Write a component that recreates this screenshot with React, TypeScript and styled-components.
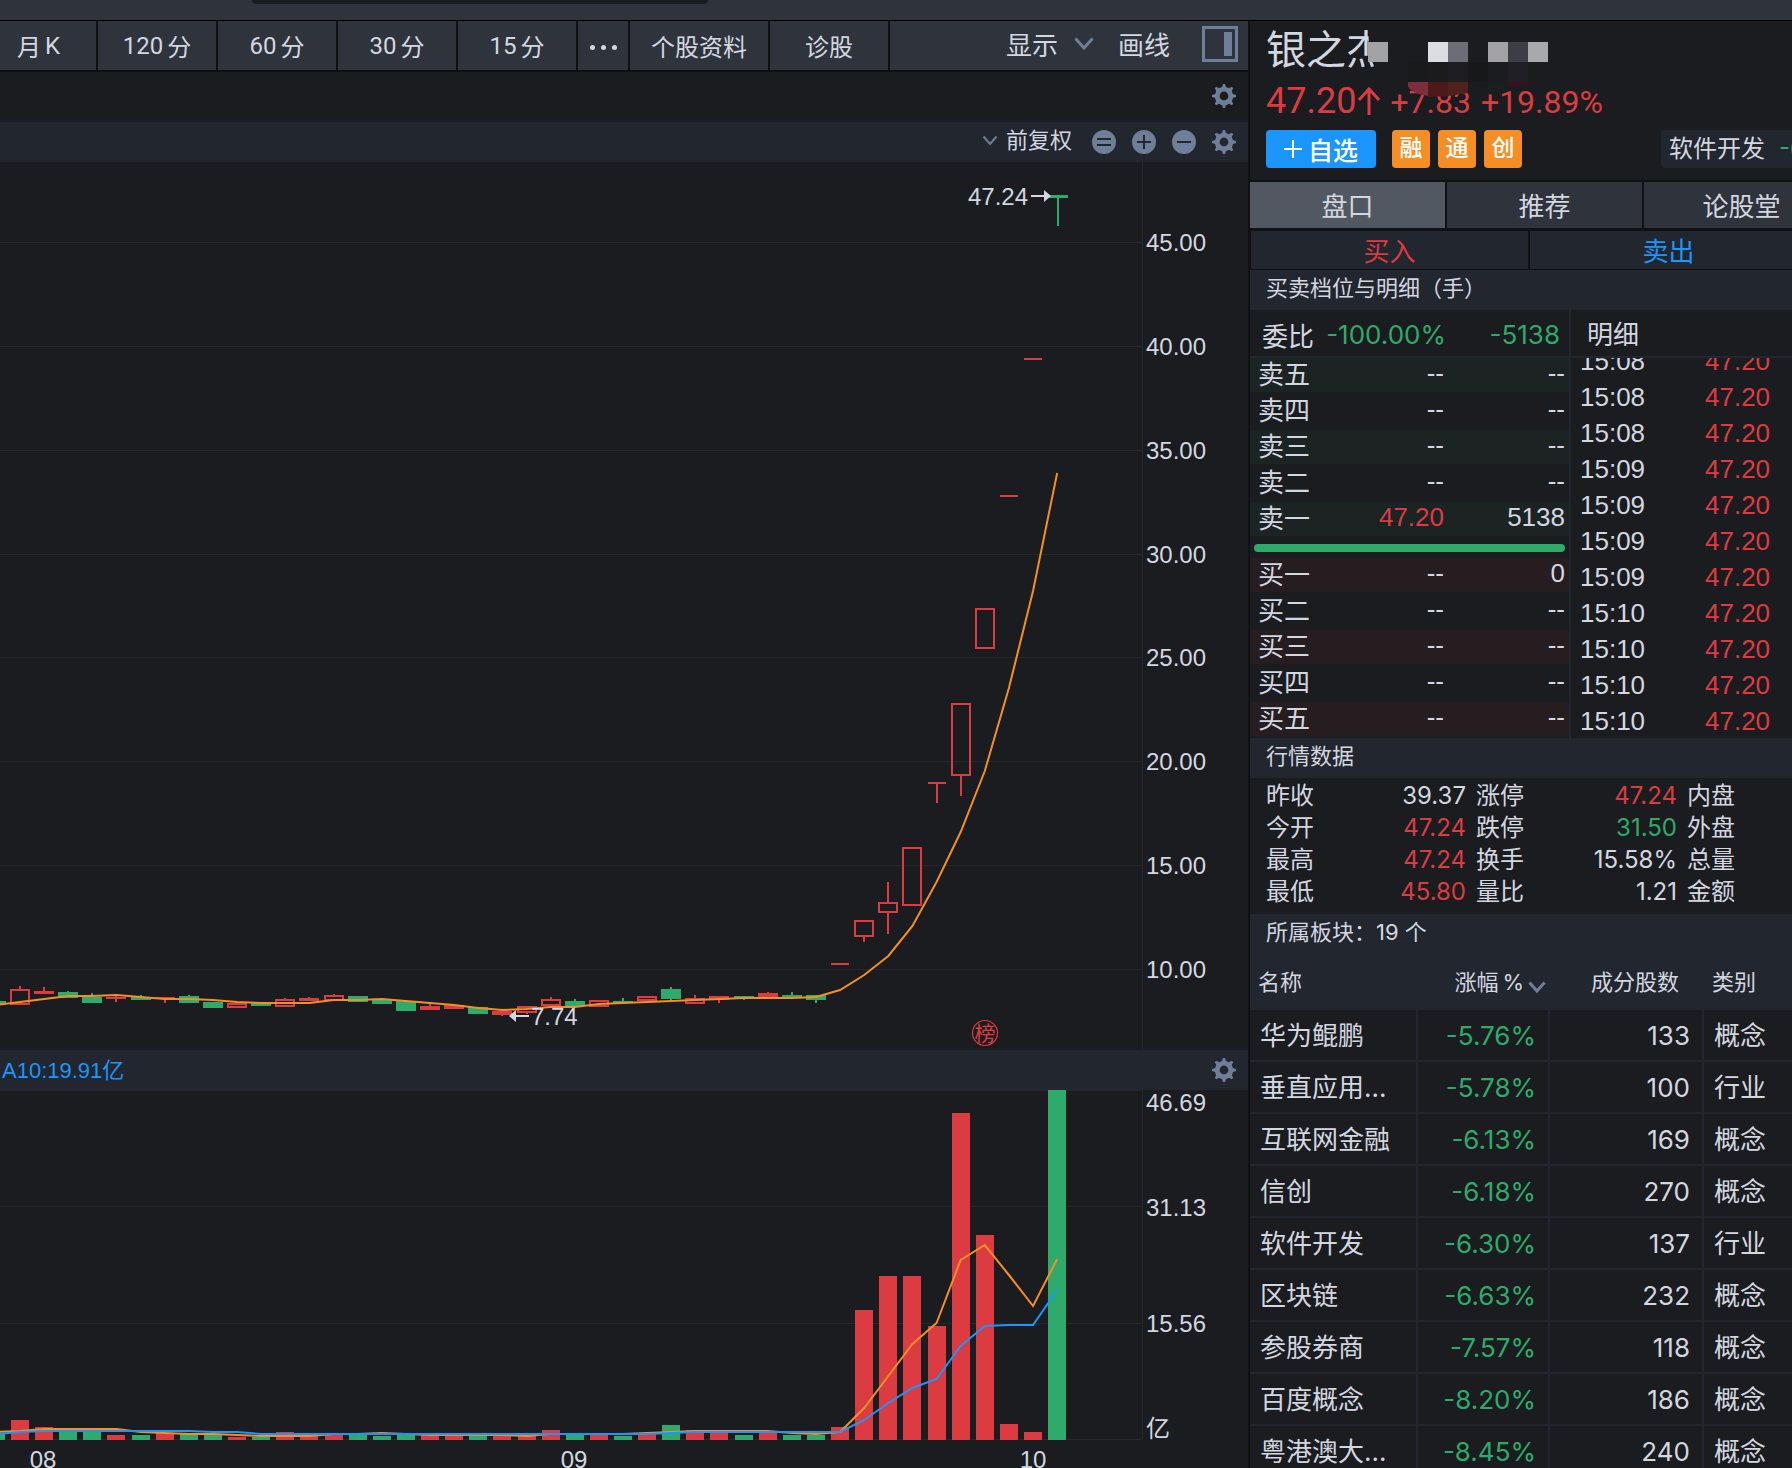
import React from "react";
import styled, { createGlobalStyle, css } from "styled-components";

const c = {
  bg: "#1b1c1f",
  bar: "#22262e",
  tool: "#2f333c",
  active: "#525862",
  edge: "#101114",
  grid: "#25272c",
  text: "#d3d7e0",
  icon: "#6f7f99",
  red: "#dc3c41",
  green: "#2eab6b",
  blue: "#1b96fd",
  orange: "#f58f25",
};

type Tone = "red" | "green" | "plain";
const toneColor = (t: Tone = "plain") => (t === "red" ? c.red : t === "green" ? c.green : c.text);

const UI = `Inter, "Noto Sans CJK SC", sans-serif`;
const NUM = `Roboto, "Noto Sans CJK SC", sans-serif`;
const AXIS = `"Liberation Sans", "Noto Sans CJK SC", sans-serif`;

const Global = createGlobalStyle`
  * { box-sizing: border-box; }
  body { margin: 0; background: ${c.bg}; color: ${c.text}; font-family: ${UI}; }
  button, select { font: inherit; color: inherit; background: none; border: 0; margin: 0; padding: 0; cursor: pointer; }
`;

const Shell = styled.div`
  display: flex;
  flex-direction: column;
  height: 100vh;
  overflow: hidden;
`;

const TitleBar = styled.header`
  flex: none;
  display: flex;
  height: 21px;
  padding-left: 252px;
  background: ${c.tool};
  border-bottom: 1px solid #000;
`;

const SearchEdge = styled.div`
  width: 456px;
  height: 4px;
  background: #1a1c20;
  border-radius: 0 0 6px 6px;
`;

const Body = styled.div`
  flex: 1;
  min-height: 0;
  display: flex;
`;

const ChartPane = styled.main`
  flex: 1;
  min-width: 0;
  display: flex;
  flex-direction: column;
`;

const Toolbar = styled.nav`
  flex: none;
  display: flex;
  height: 51px;
  background: ${c.tool};
  border-bottom: 2px solid ${c.edge};
`;

const Period = styled.button<{ $w: number; $first?: boolean }>`
  display: flex;
  align-items: center;
  justify-content: ${(p) => (p.$first ? "flex-start" : "center")};
  gap: 4px;
  width: ${(p) => p.$w}px;
  padding-left: ${(p) => (p.$first ? 17 : 0)}px;
  border-right: 2px solid ${c.edge};
  font-family: ${NUM};
  font-size: 24px;
`;

const Dots = styled.span`
  display: flex;
  gap: 6px;
  padding-top: 4px;
  i { width: 5px; height: 5px; border-radius: 50%; background: ${c.text}; }
`;

const ToolRight = styled.div`
  display: flex;
  align-items: center;
  gap: 24px;
  margin-left: auto;
  padding: 0 10px 4px 0;
  font-size: 26px;
`;

const ToolButton = styled.button`
  display: flex;
  align-items: center;
  gap: 16px;
  height: 36px;
  & + & + & { margin-left: 8px; }
`;

const IconRow = styled.div<{ $h: number; $fill?: boolean }>`
  flex: none;
  display: flex;
  align-items: center;
  justify-content: flex-end;
  gap: 16px;
  height: ${(p) => p.$h}px;
  padding: 0 12px ${(p) => (p.$fill ? 0 : 2)}px 0;
  background: ${(p) => (p.$fill ? c.bar : c.bg)};
`;

const IconButton = styled.button`
  display: flex;
  width: 24px;
  height: 24px;
`;

const Adjust = styled.label`
  display: flex;
  align-items: center;
  gap: 8px;
  margin-right: 3px;
  padding-bottom: 4px;
  font-size: 22px;
  select { appearance: none; line-height: 32px; height: 34px; outline: none; }
`;

const Indicator = styled.span`
  flex: 1;
  padding: 0 0 4px 2px;
  font-family: ${AXIS};
  font-size: 22px;
  color: ${c.blue};
`;

const Plot = styled.svg<{ $h: number }>`
  flex: none;
  display: block;
  width: 100%;
  height: ${(p) => p.$h}px;
  font-family: ${AXIS};
  font-size: 24px;
  fill: ${c.text};
`;

const Side = styled.aside`
  flex: none;
  width: 544px;
  overflow: hidden;
  border-left: 2px solid ${c.edge};
`;

const Quote = styled.section`
  position: relative;
  height: 161px;
  padding: 9px 0 0 16px;
  border-bottom: 2px solid ${c.edge};
`;

const Name = styled.h1`
  margin: 0;
  font-size: 40px;
  font-weight: 400;
  line-height: 40px;
`;

const Mosaic = styled.svg`
  position: absolute;
  left: 110px;
  top: 4px;
`;

const PriceLine = styled.div`
  display: flex;
  align-items: baseline;
  gap: 10px;
  margin-top: 7px;
  height: 48px;
  line-height: 48px;
  font-family: ${NUM};
  font-size: 32px;
  color: ${c.red};
`;

const Last = styled.strong`
  display: flex;
  align-items: center;
  font-size: 36px;
  font-weight: 400;
`;

const TagLine = styled.div`
  display: flex;
  align-items: center;
  gap: 8px;
  margin-top: 5px;
`;

const Watch = styled.button`
  display: flex;
  align-items: center;
  justify-content: center;
  gap: 6px;
  width: 110px;
  height: 38px;
  margin-right: 8px;
  border-radius: 4px;
  background: ${c.blue};
  color: #fff;
  font-size: 25px;
  font-weight: 500;
`;

const Tag = styled.span`
  width: 38px;
  height: 38px;
  border-radius: 4px;
  background: ${c.orange};
  color: #fff;
  font-size: 23px;
  font-weight: 500;
  line-height: 36px;
  text-align: center;
`;

const Industry = styled.a`
  display: flex;
  gap: 14px;
  margin-left: auto;
  width: 131px;
  height: 38px;
  padding-left: 8px;
  border-radius: 4px 0 0 4px;
  background: ${c.bar};
  color: ${c.text};
  font-size: 24px;
  line-height: 38px;
  text-decoration: none;
  white-space: nowrap;
  overflow: hidden;
  b { font-weight: 400; color: ${c.green}; }
`;

const Tabs = styled.div`
  display: flex;
  gap: 2px;
  height: 49px;
  background: ${c.edge};
  border-bottom: 3px solid ${c.edge};
`;

const Tab = styled.button<{ $on?: boolean }>`
  flex: 0 0 195px;
  padding-bottom: 2px;
  background: ${(p) => (p.$on ? c.active : c.tool)};
  font-size: 26px;
`;

const Trade = styled.div`
  display: flex;
  gap: 2px;
  height: 39px;
  padding-left: 1px;
  background: ${c.edge};
  border-bottom: 1px solid ${c.edge};
`;

const TradeButton = styled.button<{ $color: string }>`
  flex: 0 0 277px;
  padding-top: 4px;
  background: ${c.bar};
  color: ${(p) => p.$color};
  font-size: 26px;
  line-height: 34px;
`;

const SectionTitle = styled.h2`
  margin: 0;
  height: 40px;
  padding: 0 0 3px 16px;
  background: ${c.bar};
  font-size: 22px;
  font-weight: 400;
  line-height: 37px;
`;

const Book = styled.section`
  display: grid;
  grid-template-columns: 321px 1fr;
  height: 428px;
`;

const Depth = styled.div`
  border-right: 2px solid ${c.bar};
`;

const BookHead = styled.div`
  display: grid;
  grid-template-columns: 56px 128px 1fr;
  align-items: center;
  height: 48px;
  padding: 2px 9px 0 12px;
  border-bottom: 2px solid ${c.bar};
  font-size: 26px;
  color: ${c.green};
  text-align: right;
  span:first-child { color: ${c.text}; text-align: left; white-space: nowrap; }
`;

const Levels = styled.dl`
  display: grid;
  gap: 2px;
  margin: 0;
`;

const Level = styled.div<{ $tint?: string }>`
  display: grid;
  grid-template-columns: 60px 126px 1fr;
  height: 34px;
  padding: 0 4px 0 8px;
  background: ${(p) => p.$tint ?? "transparent"};
  font-family: ${AXIS};
  font-size: 26px;
  line-height: 34px;
  dt { white-space: nowrap; }
  dd { margin: 0; text-align: right; line-height: 31px; }
`;

const Balance = styled.div`
  height: 8px;
  margin: 8px 4px 6px;
  border-radius: 4px;
  background: ${c.green};
`;

const Ticks = styled.div`
  display: flex;
  flex-direction: column;
  height: 428px;
`;

const TickHead = styled.div`
  flex: none;
  height: 48px;
  padding-left: 16px;
  border-bottom: 2px solid ${c.bar};
  font-size: 26px;
  line-height: 50px;
`;

const TickList = styled.div`
  flex: 1;
  min-height: 0;
  display: flex;
  flex-direction: column;
  justify-content: flex-end;
  overflow: hidden;
`;

const Tick = styled.div`
  flex: none;
  display: grid;
  grid-template-columns: 125px 1fr;
  height: 36px;
  padding-left: 9px;
  font-family: ${AXIS};
  font-size: 26px;
  line-height: 38px;
`;

const Num = styled.span<{ $tone?: Tone }>`
  color: ${(p) => toneColor(p.$tone)};
`;

const Stats = styled.dl`
  display: grid;
  grid-template-columns: 200px 201px 1fr;
  column-gap: 10px;
  margin: 0;
  padding: 2px 0 6px 16px;
  font-size: 24px;
  line-height: 32px;
`;

const Stat = styled.div`
  display: flex;
  justify-content: space-between;
  dd { margin: 0; }
`;

const Table = styled.table`
  width: 542px;
  table-layout: fixed;
  border-collapse: separate;
  border-spacing: 0;
`;

const align = css<{ $right?: boolean }>`
  text-align: ${(p) => (p.$right ? "right" : "left")};
`;

const Th = styled.th<{ $right?: boolean; $pad: number }>`
  ${align}
  height: 56px;
  padding: 0 ${(p) => p.$pad}px 0 8px;
  background: ${c.bar};
  font-size: 22px;
  font-weight: 400;
  line-height: 32px;
  white-space: nowrap;
  span { margin-left: 4px; }
  svg { margin-left: 4px; vertical-align: -3px; }
`;

const Td = styled.td<{ $right?: boolean; $tone?: Tone }>`
  ${align}
  height: 52px;
  padding: 1px 12px 0 10px;
  border-bottom: 2px solid ${c.bar};
  border-right: 2px solid ${c.bar};
  color: ${(p) => toneColor(p.$tone)};
  font-size: 26px;
  line-height: 38px;
  white-space: nowrap;
  &:last-child { border-right: 0; }
`;

/* ---------- icons ---------- */

const Gear = () => (
  <svg width="24" height="24" viewBox="0 0 24 24" aria-hidden="true">
    <circle cx="12" cy="12" r="6.8" fill="none" stroke={c.icon} strokeWidth="4.8" />
    {[0, 45, 90, 135, 180, 225, 270, 315].map((a) => (
      <path key={a} d="M9.8 4 L11 0 H13 L14.2 4 Z" fill={c.icon} transform={`rotate(${a} 12 12)`} />
    ))}
  </svg>
);

const Disc = ({ d }: { d: string }) => (
  <svg width="24" height="24" viewBox="0 0 24 24" aria-hidden="true">
    <circle cx="12" cy="12" r="12" fill={c.icon} />
    <path d={d} stroke={c.bar} strokeWidth="2" fill="none" />
  </svg>
);

const Chevron = ({ w, h, s = 3 }: { w: number; h: number; s?: number }) => (
  <svg width={w} height={h} viewBox={`0 0 ${w} ${h}`} aria-hidden="true">
    <path d={`M1.5 1.5 L${w / 2} ${h - 2} L${w - 1.5} 1.5`} fill="none" stroke={c.icon} strokeWidth={s} />
  </svg>
);

const PanelIcon = () => (
  <svg width="36" height="36" viewBox="0 0 36 36" aria-hidden="true">
    <rect x="1.5" y="1.5" width="33" height="33" fill="none" stroke={c.icon} strokeWidth="3" />
    <rect x="22" y="6" width="8" height="24" fill={c.icon} />
  </svg>
);

/* ---------- chart data ---------- */

const xAt = (k: number) => 20 + k * 24.12;

type Candle = [kind: "g" | "r" | "h" | "l", top: number, bottom: number, high?: number, low?: number];

const candles: Candle[] = [
  ["g", 1001, 1004], ["h", 989, 1005, 986], ["r", 991, 994, 987], ["g", 992, 998, 991],
  ["g", 997, 1003, 993], ["r", 997, 999, 995, 1002], ["g", 997, 1000, 995], ["r", 997, 999, 997, 1003],
  ["g", 996, 1003, 995], ["g", 1002, 1008], ["h", 1003, 1008], ["g", 1003, 1006],
  ["h", 999, 1007, 998], ["r", 998, 1001, 997], ["h", 995, 1001, 994], ["g", 996, 1002],
  ["g", 999, 1004, 998], ["g", 1001, 1011, 1000], ["r", 1006, 1010, 1004], ["r", 1005, 1009],
  ["g", 1007, 1014], ["r", 1011, 1015, 1011, 1016], ["h", 1006, 1013, 1006, 1014], ["h", 999, 1006, 997],
  ["g", 1001, 1006, 999], ["h", 1000, 1007], ["g", 1001, 1003, 998], ["h", 996, 1001],
  ["g", 989, 999, 987, 1000], ["h", 998, 1004, 995], ["r", 996, 1000, 996, 1003], ["g", 996, 999, 996, 1000],
  ["h", 993, 997, 992], ["g", 995, 997, 992], ["g", 995, 1000, 995, 1003], ["l", 963, 965],
  ["h", 920, 937, 920, 942], ["h", 902, 913, 882, 934], ["h", 847, 906], ["l", 782, 784, 782, 803],
  ["h", 703, 776, 703, 796], ["h", 608, 649], ["l", 495, 497], ["l", 358, 360],
];

const ma = [
  1005, 1002, 999, 996, 996, 995, 997, 999, 999, 1000, 1002, 1003, 1003, 1003, 1000, 1000, 999, 1001, 1003,
  1005, 1008, 1010, 1009, 1007, 1007, 1004, 1003, 1002, 1001, 1000, 999, 998, 998, 998, 997, 990, 975, 956,
  926, 882, 832, 771, 688, 591, 473,
];

const volumes: [boolean, number][] = [
  [false, 1434], [true, 1420], [true, 1427], [false, 1432], [false, 1432], [true, 1435], [false, 1435],
  [true, 1433], [false, 1434], [false, 1434], [true, 1437], [false, 1437], [true, 1432], [true, 1436],
  [true, 1433], [false, 1435], [false, 1436], [false, 1434], [true, 1435], [true, 1435], [false, 1435],
  [true, 1435], [true, 1435], [true, 1430], [false, 1435], [true, 1435], [false, 1436], [true, 1434],
  [false, 1425], [true, 1430], [true, 1433], [false, 1435], [true, 1433], [false, 1435], [false, 1435],
  [true, 1427], [true, 1310], [true, 1276], [true, 1276], [true, 1326], [true, 1113], [true, 1235],
  [true, 1424], [true, 1432], [false, 1090],
];

const volMa5 = [
  1432, 1431, 1429, 1429, 1429, 1429, 1432, 1433, 1434, 1434, 1435, 1436, 1436, 1436, 1434, 1434, 1433, 1434,
  1435, 1435, 1435, 1435, 1436, 1434, 1434, 1434, 1434, 1433, 1432, 1431, 1431, 1431, 1431, 1433, 1434, 1432,
  1408, 1376, 1344, 1323, 1260, 1245, 1275, 1306, 1259,
];

const volMa10 = [
  1434, 1432, 1431, 1431, 1431, 1431, 1431, 1431, 1431, 1432, 1432, 1434, 1434, 1434, 1434, 1434, 1434, 1434,
  1434, 1434, 1434, 1434, 1434, 1434, 1434, 1434, 1434, 1434, 1433, 1432, 1432, 1432, 1432, 1432, 1432, 1432,
  1420, 1403, 1388, 1379, 1346, 1326, 1325, 1325, 1290,
];

const line = (ys: number[]) => ys.map((y, i) => `${xAt(i - 1)},${y}`).join(" ");

const priceAxis: [string, number][] = [45, 40, 35, 30, 25, 20, 15, 10].map((v, i) => [
  v.toFixed(2),
  Math.round(242 + i * 103.85),
]);
const volumeAxis: [string, number][] = [["46.69", 1102], ["31.13", 1207], ["15.56", 1323], ["亿", 1428]];
const months: [string, number][] = [["08", 43], ["09", 574], ["10", 1033]];

const PriceChart = () => (
  <Plot $h={888} viewBox="0 162 1248 888" preserveAspectRatio="xMaxYMin slice" role="img" aria-label="日K线">
    <g fill={c.grid}>
      {priceAxis.map(([t, y]) => <rect key={t} x="0" y={y} width="1142" height="1" />)}
      <rect x="1142" y="162" width="1" height="888" />
    </g>
    {priceAxis.map(([t, y]) => <text key={t} x="1146" y={y + 9}>{t}</text>)}
    {candles.map(([kind, top, bottom, high = top, low = bottom], i) => {
      const x = Math.round(xAt(i - 1));
      const color = kind === "g" ? c.green : c.red;
      const half = kind === "l" ? 9 : 10;
      return (
        <g key={i} fill={color}>
          {high < top && <rect x={x - 1} y={high} width="2" height={top - high} />}
          {low > bottom && <rect x={x - 1} y={bottom} width="2" height={low - bottom} />}
          {kind === "h" ? (
            <rect x={x - 9} y={top + 1} width="18" height={bottom - top - 2} fill="none" stroke={color} strokeWidth="2" />
          ) : (
            <rect x={x - half} y={top} width={half * 2} height={bottom - top} />
          )}
        </g>
      );
    })}
    <path d="M1049 195h19v3h-9v28h-2v-28h-8z" fill={c.green} />
    <polyline points={line(ma)} fill="none" stroke={c.orange} strokeWidth="2" />
    <text x="968" y="205">47.24</text>
    <path d="M1031 195h13v-5l7 6l-7 6v-5h-13z" />
    <text x="531" y="1025">7.74</text>
    <path d="M529 1015h-13v-5l-7 6l7 6v-5h13z" />
    <g fill={c.red}>
      <circle cx="985" cy="1033" r="12.5" fill="none" stroke={c.red} strokeWidth="1.2" />
      <text x="985" y="1041" fontSize="21" textAnchor="middle">榜</text>
    </g>
  </Plot>
);

const VolumeChart = () => (
  <Plot $h={378} viewBox="0 1090 1248 378" preserveAspectRatio="xMaxYMin slice" role="img" aria-label="成交额">
    <g fill={c.grid}>
      {[1090, 1206, 1323, 1439].map((y) => <rect key={y} x="0" y={y} width="1142" height="1" />)}
      <rect x="1142" y="1090" width="1" height="350" />
    </g>
    {volumeAxis.map(([t, y]) => <text key={t} x="1146" y={y + 9}>{t}</text>)}
    {volumes.map(([up, y], i) => (
      <rect key={i} x={Math.round(xAt(i - 1)) - 9} y={y} width="18" height={1440 - y} fill={up ? c.red : c.green} />
    ))}
    <polyline points={line(volMa5)} fill="none" stroke={c.orange} strokeWidth="2" />
    <polyline points={line(volMa10)} fill="none" stroke={c.blue} strokeWidth="2" />
    {months.map(([t, x]) => <text key={t} x={x} y="1468" textAnchor="middle">{t}</text>)}
  </Plot>
);

/* ---------- quote data ---------- */

const asks = ["卖五", "卖四", "卖三", "卖二", "卖一"];
const bids = ["买一", "买二", "买三", "买四", "买五"];
const tickTimes = ["15:08", "15:08", "15:08", "15:09", "15:09", "15:09", "15:09", "15:10", "15:10", "15:10", "15:10"];

const stats: [string, string, Tone][] = [
  ["昨收", "39.37", "plain"], ["涨停", "47.24", "red"], ["内盘", "", "plain"],
  ["今开", "47.24", "red"], ["跌停", "31.50", "green"], ["外盘", "", "plain"],
  ["最高", "47.24", "red"], ["换手", "15.58%", "plain"], ["总量", "", "plain"],
  ["最低", "45.80", "red"], ["量比", "1.21", "plain"], ["金额", "", "plain"],
];

const sectors: [string, string, string, string][] = [
  ["华为鲲鹏", "-5.76%", "133", "概念"],
  ["垂直应用...", "-5.78%", "100", "行业"],
  ["互联网金融", "-6.13%", "169", "概念"],
  ["信创", "-6.18%", "270", "概念"],
  ["软件开发", "-6.30%", "137", "行业"],
  ["区块链", "-6.63%", "232", "概念"],
  ["参股券商", "-7.57%", "118", "概念"],
  ["百度概念", "-8.20%", "186", "概念"],
  ["粤港澳大...", "-8.45%", "240", "概念"],
];

const NameMosaic = () => (
  <Mosaic width="200" height="76" viewBox="0 4 200 76" aria-hidden="true">
    <path d="M8 4 H200 V55 L100 71 L68 75 Q54 74 47 60 Q20 55 12 40 Q7 22 9 4 Z" fill={c.bg} />
    {([
      [8, 21, "#a3a3a7"], [68, 21, "#dcdde2"], [88, 21, "#6d6d77"],
      [128, 21, "#a3a3a7"], [148, 21, "#3d3d46"], [168, 21, "#a9a9ad"],
      [48, 41, "#191a1b"], [68, 41, "#1b1b1e"], [88, 41, "#1d1d22"], [108, 41, "#17181a"], [148, 41, "#1f1f25"],
    ] as [number, number, string][]).map(([x, y, f]) => (
      <rect key={`${x}-${y}`} x={x} y={y} width="20" height="20" fill={f} />
    ))}
    <path d="M48 61 H68 V75 Q53 73 48 66 Z" fill="#7d2e3d" />
    <path d="M68 61 H88 V75 L68 76 Z" fill="#4c1a18" />
    <path d="M88 61 H108 V72 L88 75 Z" fill="#4f221b" />
    <path d="M128 61 H148 V66 L128 69 Z" fill="#16201e" />
    <path d="M148 61 H184 L148 66 Z" fill="#3d0f1a" />
  </Mosaic>
);

const App: React.FC = () => (
  <>
    <Global />
    <Shell>
      <TitleBar><SearchEdge /></TitleBar>
      <Body>
        <ChartPane>
          <Toolbar>
            <Period $w={98} $first><span>月</span><span>K</span></Period>
            {["120", "60", "30", "15"].map((m) => (
              <Period key={m} $w={120}><span>{m}</span><span>分</span></Period>
            ))}
            <Period $w={52} aria-label="更多"><Dots><i /><i /><i /></Dots></Period>
            <Period $w={140}>个股资料</Period>
            <Period $w={120}>诊股</Period>
            <ToolRight>
              <ToolButton>显示<Chevron w={20} h={13} /></ToolButton>
              <ToolButton>画线</ToolButton>
              <ToolButton aria-label="侧栏"><PanelIcon /></ToolButton>
            </ToolRight>
          </Toolbar>
          <IconRow $h={50}>
            <IconButton aria-label="设置"><Gear /></IconButton>
          </IconRow>
          <IconRow $h={40} $fill>
            <Adjust>
              <Chevron w={16} h={11} s={2} />
              <select aria-label="复权方式"><option>前复权</option></select>
            </Adjust>
            <IconButton aria-label="重置"><Disc d="M5 9H19M5 15H19" /></IconButton>
            <IconButton aria-label="放大"><Disc d="M5 12H19M12 5V19" /></IconButton>
            <IconButton aria-label="缩小"><Disc d="M5 12H19" /></IconButton>
            <IconButton aria-label="设置"><Gear /></IconButton>
          </IconRow>
          <PriceChart />
          <IconRow $h={40} $fill>
            <Indicator>A10:19.91亿</Indicator>
            <IconButton aria-label="设置"><Gear /></IconButton>
          </IconRow>
          <VolumeChart />
        </ChartPane>

        <Side>
          <Quote>
            <Name>银之杰</Name>
            <PriceLine>
              <Last>
                47.20
                <svg width="24" height="30" viewBox="0 0 24 30" aria-hidden="true">
                  <path d="M13 29V3M3 14L13 3L23 14" fill="none" stroke={c.red} strokeWidth="3" />
                </svg>
              </Last>
              <span>+7.83</span>
              <span>+19.89%</span>
            </PriceLine>
            <TagLine>
              <Watch>
                <svg width="18" height="18" viewBox="0 0 18 18" aria-hidden="true">
                  <path d="M0 9H18M9 0V18" stroke="#fff" strokeWidth="2" />
                </svg>
                自选
              </Watch>
              <Tag>融</Tag>
              <Tag>通</Tag>
              <Tag>创</Tag>
              <Industry href="#industry">软件开发<b>-6.30%</b></Industry>
            </TagLine>
            <NameMosaic />
          </Quote>
          <Tabs>
            <Tab $on>盘口</Tab>
            <Tab>推荐</Tab>
            <Tab>论股堂</Tab>
          </Tabs>
          <Trade>
            <TradeButton $color={c.red}>买入</TradeButton>
            <TradeButton $color={c.blue}>卖出</TradeButton>
          </Trade>
          <SectionTitle>买卖档位与明细（手）</SectionTitle>
          <Book>
            <Depth>
              <BookHead><span>委比</span><span>-100.00%</span><span>-5138</span></BookHead>
              <Levels>
                {asks.map((n, i) => (
                  <Level key={n} $tint={i % 2 ? undefined : "#1c2323"}>
                    <dt>{n}</dt>
                    <dd><Num $tone={i === 4 ? "red" : "plain"}>{i === 4 ? "47.20" : "--"}</Num></dd>
                    <dd>{i === 4 ? "5138" : "--"}</dd>
                  </Level>
                ))}
              </Levels>
              <Balance />
              <Levels>
                {bids.map((n, i) => (
                  <Level key={n} $tint={i % 2 ? undefined : "#251d20"}>
                    <dt>{n}</dt>
                    <dd>--</dd>
                    <dd>{i === 0 ? "0" : "--"}</dd>
                  </Level>
                ))}
              </Levels>
            </Depth>
            <Ticks>
              <TickHead>明细</TickHead>
              <TickList>
                {tickTimes.map((t, i) => (
                  <Tick key={i}><span>{t}</span><Num $tone="red">47.20</Num></Tick>
                ))}
              </TickList>
            </Ticks>
          </Book>
          <SectionTitle>行情数据</SectionTitle>
          <Stats>
            {stats.map(([label, value, tone]) => (
              <Stat key={label}><dt>{label}</dt><dd><Num $tone={tone}>{value}</Num></dd></Stat>
            ))}
          </Stats>
          <SectionTitle>所属板块：19 个</SectionTitle>
          <Table>
            <colgroup>
              <col style={{ width: 168 }} />
              <col style={{ width: 132 }} />
              <col style={{ width: 154 }} />
              <col />
            </colgroup>
            <thead>
              <tr>
                <Th $pad={0}>名称</Th>
                <Th $pad={4} $right>涨幅<span>%</span><Chevron w={18} h={12} /></Th>
                <Th $pad={25} $right>成分股数</Th>
                <Th $pad={0}>类别</Th>
              </tr>
            </thead>
            <tbody>
              {sectors.map(([name, pct, count, kind]) => (
                <tr key={name}>
                  <Td>{name}</Td>
                  <Td $right $tone="green">{pct}</Td>
                  <Td $right>{count}</Td>
                  <Td>{kind}</Td>
                </tr>
              ))}
            </tbody>
          </Table>
        </Side>
      </Body>
    </Shell>
  </>
);

export default App;
